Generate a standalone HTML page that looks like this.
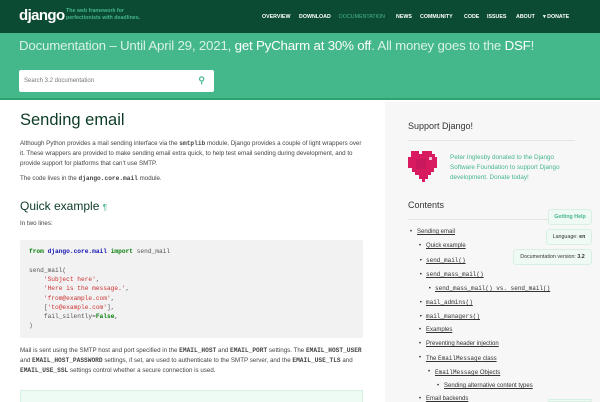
<!DOCTYPE html>
<html style="overflow:hidden;height:402px"><head><meta charset="utf-8"><style>
*{margin:0;padding:0;box-sizing:border-box}
body{width:600px;height:402px;overflow:hidden;font-family:"Liberation Sans",sans-serif;background:#fff;position:relative;color:#333}
.hdr{position:absolute;left:0;top:0;width:600px;height:33px;background:#0c4b33}
.logo{position:absolute;left:19px;top:7px;color:#fff;font-weight:bold;font-size:15px;letter-spacing:-0.6px}
.tag{position:absolute;left:66px;top:8px;color:#44b78b;font-size:5.3px;line-height:7px;font-weight:bold}
.nav{position:absolute;top:14px;font-size:5.3px;font-weight:bold;color:#fff}
.ban{position:absolute;left:0;top:33px;width:600px;height:67px;background:#44b78b;border-bottom:2px solid #2aa36f}
.ban h1{position:absolute;left:19px;top:5px;font-weight:normal;font-size:13.3px;color:#d9f2e8;letter-spacing:-0.2px;white-space:nowrap}
.ban h1 b{font-weight:normal;color:#fff}
.srch{position:absolute;left:19px;top:37px;width:195px;height:22px;background:#fff;border-radius:2px;font-size:6px;color:#777;padding:8px 5px}
.side{position:absolute;left:385px;top:102px;width:215px;height:300px;background:#f7f7f7}
.t{position:absolute;font-size:6.2px;line-height:10px;color:#444;white-space:nowrap}
code,.m{font-family:"Liberation Mono",monospace}
.code{position:absolute;left:20px;top:240px;width:343px;height:98px;background:#f2f2f2;border-radius:2px}
.cl{position:absolute;left:29px;font-family:"Liberation Mono",monospace;font-size:6.2px;color:#555;white-space:nowrap}
.k{color:#0a7f0a;font-weight:bold}.n{color:#1515b3;font-weight:bold}.s{color:#c33}
.li{position:absolute;font-size:6px;color:#333;text-decoration:underline;white-space:nowrap}
.li:before{content:"•";position:absolute;left:-7px;text-decoration:none}
.btn{position:absolute;background:#f0faf5;border:1px solid #d8efe3;border-radius:3px;font-size:5.3px;color:#333;text-align:center;line-height:14px}
</style></head><body>
<div class="hdr">
<div class="logo">django</div>
<div class="tag">The web framework for<br>perfectionists with deadlines.</div>
<span class="nav" style="left:262px">OVERVIEW</span>
<span class="nav" style="left:299px">DOWNLOAD</span>
<span class="nav" style="left:339px;color:#44b78b;font-weight:normal">DOCUMENTATION</span>
<span class="nav" style="left:396px">NEWS</span>
<span class="nav" style="left:420px">COMMUNITY</span>
<span class="nav" style="left:464px">CODE</span>
<span class="nav" style="left:487px">ISSUES</span>
<span class="nav" style="left:516px">ABOUT</span>
<span class="nav" style="left:543px">▾ DONATE</span>
</div>
<div class="ban"><h1>Documentation – Until April 29, 2021, <b>get PyCharm at 30% off</b>. All money goes to the <b>DSF</b>!</h1>
<div class="srch">Search 3.2 documentation<span style="position:absolute;right:9px;top:5px;color:#44b78b;font-size:9px;font-weight:bold">⚲</span></div></div>
<div style="position:absolute;left:20px;top:111px;font-size:16.5px;color:#0c3c26">Sending email</div>
<div class="t" style="left:20px;top:139px">Although Python provides a mail sending interface via the <b class="m">smtplib</b> module, Django provides a couple of light wrappers over</div>
<div class="t" style="left:20px;top:149px">it. These wrappers are provided to make sending email extra quick, to help test email sending during development, and to</div>
<div class="t" style="left:20px;top:159px">provide support for platforms that can’t use SMTP.</div>
<div class="t" style="left:20px;top:174px">The code lives in the <b class="m">django.core.mail</b> module.</div>
<div style="position:absolute;left:20px;top:199px;font-size:12px;color:#0c3c26">Quick example <span style="color:#44b78b;font-size:8px">¶</span></div>
<div class="t" style="left:20px;top:219px">In two lines:</div>
<div class="code"></div>
<div class="cl" style="top:248px"><span class="k">from</span> <span class="n">django.core.mail</span> <span class="k">import</span> send_mail</div>
<div class="cl" style="top:267px">send_mail(</div>
<div class="cl" style="top:276px">&nbsp;&nbsp;&nbsp;&nbsp;<span class="s">'Subject here'</span>,</div>
<div class="cl" style="top:285px">&nbsp;&nbsp;&nbsp;&nbsp;<span class="s">'Here is the message.'</span>,</div>
<div class="cl" style="top:295px">&nbsp;&nbsp;&nbsp;&nbsp;<span class="s">'from@example.com'</span>,</div>
<div class="cl" style="top:304px">&nbsp;&nbsp;&nbsp;&nbsp;[<span class="s">'to@example.com'</span>],</div>
<div class="cl" style="top:313px">&nbsp;&nbsp;&nbsp;&nbsp;fail_silently=<span class="k">False</span>,</div>
<div class="cl" style="top:322px">)</div>
<div class="t" style="left:20px;top:346px">Mail is sent using the SMTP host and port specified in the <b class="m">EMAIL_HOST</b> and <b class="m">EMAIL_PORT</b> settings. The <b class="m">EMAIL_HOST_USER</b></div>
<div class="t" style="left:20px;top:356px">and <b class="m">EMAIL_HOST_PASSWORD</b> settings, if set, are used to authenticate to the SMTP server, and the <b class="m">EMAIL_USE_TLS</b> and</div>
<div class="t" style="left:20px;top:366px"><b class="m">EMAIL_USE_SSL</b> settings control whether a secure connection is used.</div>
<div style="position:absolute;left:20px;top:390px;width:343px;height:12px;background:#eefbf4;border:1px solid #d6f0e2;border-bottom:none"></div>
<div class="side"></div>
<div style="position:absolute;left:408px;top:121px;font-size:9px;color:#333">Support Django!</div>
<div style="position:absolute;left:408px;top:140px;width:167px;height:1px;background:#e0e8e4"></div>
<svg style="position:absolute;left:408px;top:151px" width="29" height="31" viewBox="0 0 29 31"><path fill="#d81b60" d="M3 0h8v3h3V0h10v3h3v3h2v11h-3v4h-3v3h-3v4h-3v3h-3v-3h-3v-4H7v-3H4v-4H0V6h3z"/><rect x="8" y="8" width="10" height="10" fill="#c2185b" opacity=".6"/><rect x="21" y="6" width="3" height="3" fill="#f8bbd0"/></svg>
<div style="position:absolute;left:450px;top:153px;font-size:6.3px;line-height:10px;color:#44b78b">Peter Inglesby donated to the Django<br>Software Foundation to support Django<br>development. Donate today!</div>
<div style="position:absolute;left:408px;top:200px;font-size:9px;color:#333">Contents</div>
<div style="position:absolute;left:408px;top:219px;width:167px;height:1px;background:#e0e8e4"></div>
<span class="li" style="left:417px;top:229px">Sending email</span>
<span class="li" style="left:426px;top:243px">Quick example</span>
<span class="li m" style="left:426px;top:257px">send_mail()</span>
<span class="li m" style="left:426px;top:271px">send_mass_mail()</span>
<span class="li m" style="left:435px;top:285px">send_mass_mail() vs. send_mail()</span>
<span class="li m" style="left:426px;top:299px">mail_admins()</span>
<span class="li m" style="left:426px;top:313px">mail_managers()</span>
<span class="li" style="left:426px;top:327px">Examples</span>
<span class="li" style="left:426px;top:341px">Preventing header injection</span>
<span class="li" style="left:426px;top:355px">The <span class="m">EmailMessage</span> class</span>
<span class="li" style="left:435px;top:369px"><span class="m">EmailMessage</span> Objects</span>
<span class="li" style="left:444px;top:383px">Sending alternative content types</span>
<span class="li" style="left:426px;top:396px">Email backends</span>
<div class="btn" style="left:548px;top:209px;width:44px;color:#44b78b;font-weight:bold">Getting Help</div>
<div class="btn" style="left:546px;top:229px;width:46px">Language: <b>en</b></div>
<div class="btn" style="left:513px;top:249px;width:79px">Documentation version: <b>3.2</b></div>
<div class="btn" style="left:548px;top:399px;width:44px;height:3px"></div>
</body></html>
